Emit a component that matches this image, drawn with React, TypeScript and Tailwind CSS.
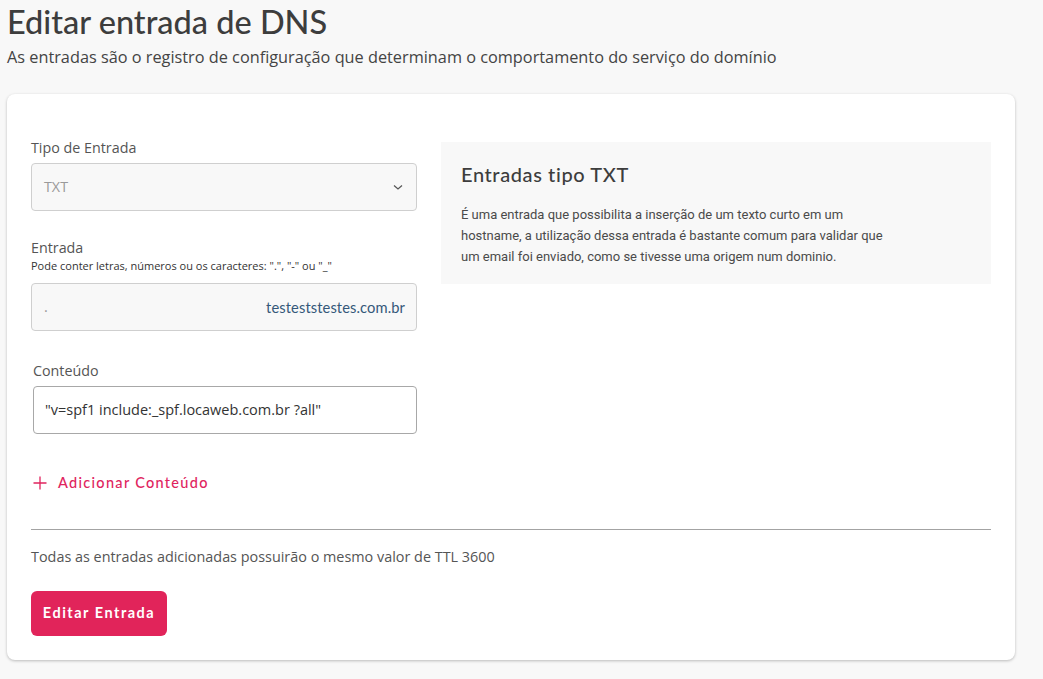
import React from "react";

const body = { fontFamily: '"Open Sans", "Noto Sans", sans-serif' };
const head = { fontFamily: 'Lato, "Open Sans", sans-serif' };
const narrow = { fontFamily: 'Roboto, "Open Sans", sans-serif' };

export default function App() {
  return (
    <div className="min-h-[679px] w-full bg-[#f8f8f8] text-[#444]" style={body}>
      <div className="px-[7px] pt-[2px]">
        <h1 className="text-[32.5px] leading-[40px] text-[#3d3d3d] font-medium" style={head}>
          Editar entrada de DNS
        </h1>
        <p className="mt-[4px] text-[16.3px] leading-[22px] text-[#444]">
          As entradas são o registro de configuração que determinam o comportamento do serviço do domínio
        </p>
        <div className="mt-[26px] w-[1008px] rounded-[8px] bg-white px-[24px] pt-[44px] pb-[24px] shadow-[0_1px_3px_rgba(0,0,0,0.25)]">
          <div className="flex gap-[24px]">
            <div className="w-[386px] flex flex-col">
              <label className="text-[14.3px] leading-[20px] text-[#555]">Tipo de Entrada</label>
              <div className="mt-[5px] flex h-[48px] items-center justify-between rounded-[4px] border border-[#cfcfcf] bg-[#f8f8f8] pl-[12px] pr-[12px]">
                <span className="text-[14.3px] text-[#9a9a9a]">TXT</span>
                <svg width="12" height="8" viewBox="0 0 12 8" fill="none">
                  <path d="M2 2.5 L6 6 L10 2.5" stroke="#555" strokeWidth="1.2" />
                </svg>
              </div>
              <label className="mt-[27px] text-[14.3px] leading-[20px] text-[#555]">Entrada</label>
              <span className="text-[11px] leading-[16px] text-[#333]">
                Pode conter letras, números ou os caracteres: ".", "-" ou "_"
              </span>
              <div className="mt-[9px] flex h-[48px] items-center justify-between rounded-[4px] border border-[#cfcfcf] bg-[#f8f8f8] pl-[12px] pr-[11px]">
                <span className="text-[14.5px] text-[#9a9a9a]">.</span>
                <span className="text-[14.7px] tracking-[0.1px] text-[#35587a]" style={head}>testeststestes.com.br</span>
              </div>
              <div className="ml-[2px] mt-[30px] flex flex-col">
                <label className="text-[14.3px] leading-[20px] text-[#555]">Conteúdo</label>
                <div className="mt-[5px] flex h-[48px] items-center rounded-[4px] border border-[#a8a8a8] bg-white pl-[11px]">
                  <span className="text-[14.5px] text-[#333]">"v=spf1 include:_spf.locaweb.com.br ?all"</span>
                </div>
                <div className="mt-[38px] flex items-center gap-[11px] text-[#e0245e]">
                  <svg width="14" height="14" viewBox="0 0 14 14">
                    <path d="M7 0.5 V13.5 M0.5 7 H13.5" stroke="#e0245e" strokeWidth="1.3" />
                  </svg>
                  <span className="text-[14.5px] tracking-[1.3px] font-medium" style={head}>Adicionar Conteúdo</span>
                </div>
              </div>
            </div>
            <div className="mt-[4px] h-[142px] flex-1 self-start bg-[#f8f8f8] px-[20px] pt-[20px]">
              <h2 className="text-[20px] leading-[24px] font-medium text-[#3d3d3d] tracking-[0.6px]" style={head}>
                Entradas tipo TXT
              </h2>
              <p className="mt-[18px] max-w-[425px] text-[13px] leading-[21px] text-[#4a4a4a]" style={narrow}>
                É uma entrada que possibilita a inserção de um texto curto em um hostname, a utilização dessa entrada é bastante comum para validar que um email foi enviado, como se tivesse uma origem num dominio.
              </p>
            </div>
          </div>
          <div className="mt-[35px] h-px bg-[#a3a3a3]" />
          <p className="mt-[17px] text-[14.4px] leading-[20px] text-[#555]">
            Todas as entradas adicionadas possuirão o mesmo valor de TTL 3600
          </p>
          <button className="mt-[24px] h-[45px] w-[136px] rounded-[6px] bg-[#e1245a] text-[14.5px] font-bold tracking-[1.5px] text-white" style={head}>
            Editar Entrada
          </button>
        </div>
      </div>
    </div>
  );
}
